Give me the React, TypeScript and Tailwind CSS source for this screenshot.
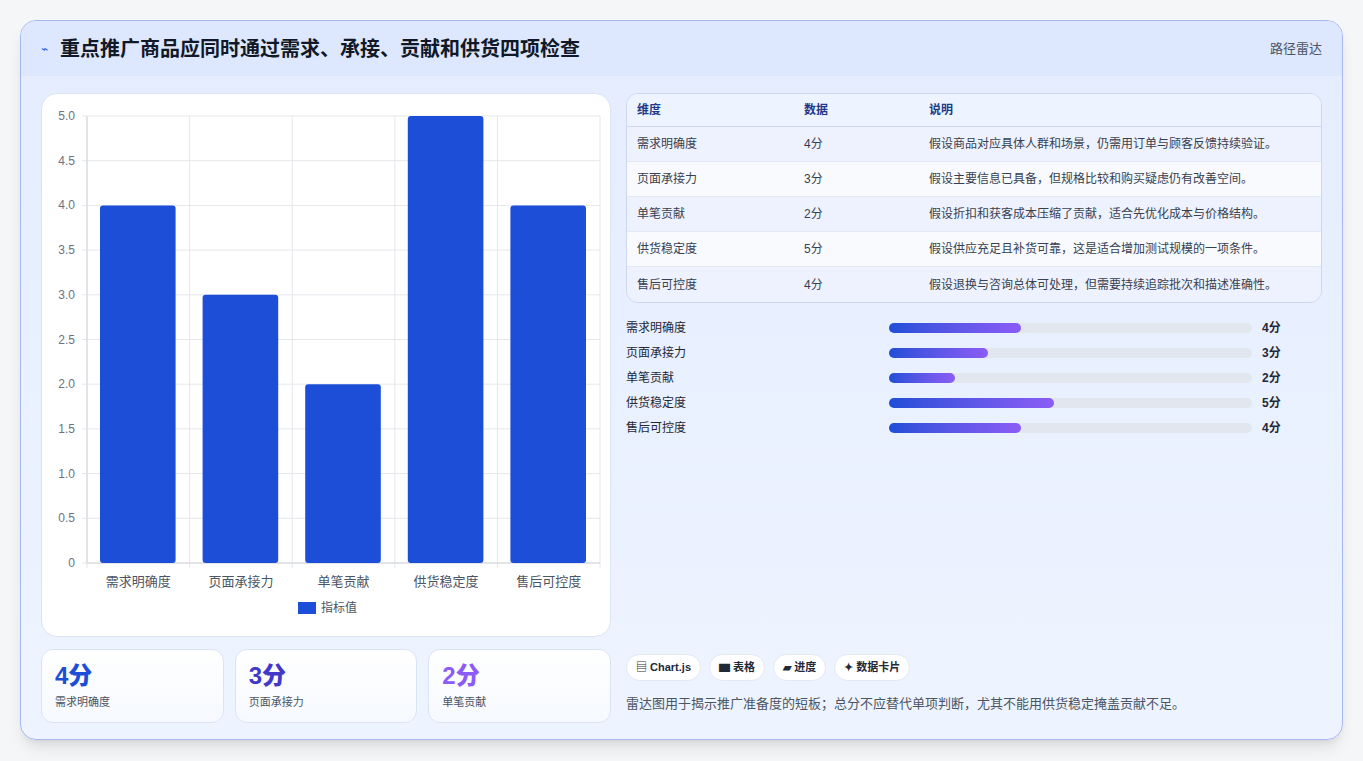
import React from "react";

const rows = [
  { n: "需求明确度", v: 4, d: "假设商品对应具体人群和场景，仍需用订单与顾客反馈持续验证。" },
  { n: "页面承接力", v: 3, d: "假设主要信息已具备，但规格比较和购买疑虑仍有改善空间。" },
  { n: "单笔贡献", v: 2, d: "假设折扣和获客成本压缩了贡献，适合先优化成本与价格结构。" },
  { n: "供货稳定度", v: 5, d: "假设供应充足且补货可靠，这是适合增加测试规模的一项条件。" },
  { n: "售后可控度", v: 4, d: "假设退换与咨询总体可处理，但需要持续追踪批次和描述准确性。" },
];

function Chart() {
  const L = 45, T = 22, B = 469, W = 513;
  const cw = W / 5;
  const ticks = [0, 0.5, 1, 1.5, 2, 2.5, 3, 3.5, 4, 4.5, 5];
  const y = (v: number) => B - (v / 5) * (B - T);
  return (
    <svg width="570" height="541" className="block" style={{ fontFamily: "'Liberation Sans','Noto Sans CJK SC',sans-serif" }}>
      {ticks.map((t) => (
        <g key={t}>
          <line x1={L - 5} x2={L + W} y1={y(t)} y2={y(t)} stroke="#e5e7eb" />
          <text x={L - 12} y={y(t) + 4} textAnchor="end" fontSize="12" fill="#6b7280">{t === 0 ? "0" : t.toFixed(1)}</text>
        </g>
      ))}
      {[0, 1, 2, 3, 4, 5].map((i) => (
        <line key={i} x1={L + i * cw} x2={L + i * cw} y1={T} y2={B + 5} stroke="#e5e7eb" />
      ))}
      <line x1={L} x2={L} y1={T} y2={B} stroke="#d1d5db" />
      <line x1={L} x2={L + W} y1={B} y2={B} stroke="#d1d5db" />
      {rows.map((r, i) => (
        <g key={r.n}>
          <rect x={L + i * cw + 13} y={y(r.v)} width={cw - 27} height={B - y(r.v)} rx="3" fill="#1d4ed8" />
          <text x={L + i * cw + cw / 2} y={B + 23} textAnchor="middle" fontSize="13" fill="#4b5563">{r.n}</text>
        </g>
      ))}
      <rect x="256" y="508" width="18" height="12" fill="#1d4ed8" />
      <text x="279" y="518" fontSize="12" fill="#4b5563">指标值</text>
    </svg>
  );
}

export default function App() {
  return (
    <div className="w-[1363px] h-[761px] bg-[#f5f6f8] p-5" style={{ fontFamily: "'Liberation Sans','Noto Sans CJK SC',sans-serif" }}>
      <div className="h-[720px] rounded-2xl border border-[#a9b8f0] bg-gradient-to-b from-[#e4ecfe] to-[#eef4ff] overflow-hidden shadow-lg flex flex-col">
        <div className="h-[55px] bg-[#dde7fd] flex items-center justify-between px-5 shrink-0">
          <div className="flex items-center gap-3">
            <span className="text-[#2563eb] text-xs">⌁</span>
            <span className="text-[20px] font-bold text-[#111827]">重点推广商品应同时通过需求、承接、贡献和供货四项检查</span>
          </div>
          <span className="text-[13px] text-[#4b5563]">路径雷达</span>
        </div>
        <div className="flex gap-[15px] px-5 pt-[17px]">
          <div className="w-[570px] flex flex-col gap-3">
            <div className="h-[544px] bg-white rounded-2xl border border-[#dbe4f5]"><Chart /></div>
            <div className="grid grid-cols-3 gap-[11px]">
              {[
                ["4分", "需求明确度", "text-[#1d4ed8]"],
                ["3分", "页面承接力", "text-[#4338ca]"],
                ["2分", "单笔贡献", "text-[#8b5cf6]"],
              ].map(([a, b, c]) => (
                <div key={b} className="h-[74px] bg-gradient-to-b from-white to-[#f6f9ff] rounded-xl border border-[#dbe4f5] px-[13px] pt-[11px]">
                  <div className={`text-[24px] font-extrabold leading-[30px] ${c}`}>{a}</div>
                  <div className="text-[11px] text-[#4b5563] mt-[3px]">{b}</div>
                </div>
              ))}
            </div>
          </div>
          <div className="flex-1 flex flex-col">
            <div className="rounded-xl border border-[#cdd7ee] overflow-hidden text-[12px]">
              <div className="h-[33px] bg-[#eef4ff] flex items-center text-[#1e3a8a] font-semibold border-b border-[#cdd7ee]">
                <div className="w-[177px] pl-[10px]">维度</div><div className="w-[125px]">数据</div><div>说明</div>
              </div>
              {rows.map((r, i) => (
                <div key={r.n} className={`h-[35px] flex items-center text-[#374151] ${i % 2 ? "bg-[#f8fafd]" : "bg-[#eef2fe]"} ${i < 4 ? "border-b border-[#e2e8f4]" : ""}`}>
                  <div className="w-[177px] pl-[10px]">{r.n}</div><div className="w-[125px]">{r.v}分</div><div>{r.d}</div>
                </div>
              ))}
            </div>
            <div className="flex flex-col mt-[12px]">
              {rows.map((r) => (
                <div key={r.n} className="h-[25px] flex items-center text-[12px] text-[#1f2937]">
                  <div className="w-[263px]">{r.n}</div>
                  <div className="w-[363px] h-[10px] rounded-full bg-[#e2e6ef]">
                    <div className="h-full rounded-full bg-gradient-to-r from-[#1d4ed8] to-[#8b5cf6]" style={{ width: `${(r.v / 11) * 100}%` }} />
                  </div>
                  <div className="ml-[10px] font-bold">{r.v}分</div>
                </div>
              ))}
            </div>
            <div className="mt-auto">
              <div className="flex gap-[8px] text-[11px] text-[#1f2937] font-semibold">
                {["▤ Chart.js", "▆ 表格", "▰ 进度", "✦ 数据卡片"].map((t) => (
                  <span key={t} className="h-[27px] px-[9px] flex items-center rounded-full bg-white border border-[#e2e8f0]">{t}</span>
                ))}
              </div>
              <div className="text-[13px] text-[#4b5563] mt-[13px] mb-[10px]">雷达图用于揭示推广准备度的短板；总分不应替代单项判断，尤其不能用供货稳定掩盖贡献不足。</div>
            </div>
          </div>
        </div>
      </div>
    </div>
  );
}
